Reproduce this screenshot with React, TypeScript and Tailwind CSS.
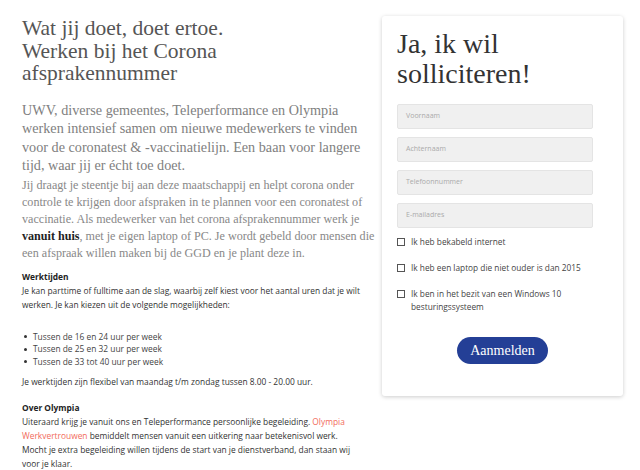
const serif = "font-['Liberation_Serif',serif]";
const sans = "font-['Open_Sans',sans-serif]";

const fields = ["Voornaam", "Achternaam", "Telefoonnummer", "E-mailadres"];

const checks = [
  "Ik heb bekabeld internet",
  "Ik heb een laptop die niet ouder is dan 2015",
  "Ik ben in het bezit van een Windows 10 besturingssysteem",
];

const hours = [
  "Tussen de 16 en 24 uur per week",
  "Tussen de 25 en 32 uur per week",
  "Tussen de 33 tot 40 uur per week",
];

export default function App() {
  return (
    <div className="flex h-[470px] w-[640px] gap-[16px] overflow-hidden bg-white pl-[22px]">
      <div className="w-[344px] shrink-0 pt-[17px]">
        <h1 className={`${serif} text-[21.5px] leading-[22.5px] text-[#555]`}>
          Wat jij doet, doet ertoe.
          <br />
          Werken bij het Corona
          <br />
          afsprakennummer
        </h1>
        <p
          className={`${serif} mt-[16px] whitespace-nowrap text-[14.2px] leading-[18.5px] text-[#808080]`}
        >
          UWV, diverse gemeentes, Teleperformance en Olympia
          <br />
          werken intensief samen om nieuwe medewerkers te vinden
          <br />
          voor de coronatest &amp; -vaccinatielijn. Een baan voor langere
          <br />
          tijd, waar jij er écht toe doet.
        </p>
        <p
          className={`${serif} mt-[2px] whitespace-nowrap text-[12.1px] leading-[17px] text-[#888]`}
        >
          Jij draagt je steentje bij aan deze maatschappij en helpt corona onder
          <br />
          controle te krijgen door afspraken in te plannen voor een coronatest of
          <br />
          vaccinatie. Als medewerker van het corona afsprakennummer werk je
          <br />
          <b className="text-[#222]">vanuit huis</b>, met je eigen laptop of PC. Je wordt gebeld
          door mensen die
          <br />
          een afspraak willen maken bij de GGD en je plant deze in.
        </p>
        <div className={`${sans} mt-[8px] text-[8.4px] leading-[14px] text-[#333]`}>
          <p className="font-bold text-[#222]">Werktijden</p>
          <p>
            Je kan parttime of fulltime aan de slag, waarbij zelf kiest voor het aantal uren dat
            je wilt
            <br />
            werken. Je kan kiezen uit de volgende mogelijkheden:
          </p>
          <ul className="mt-[19px] leading-[12.5px] text-[#444]">
            {hours.map((h) => (
              <li key={h} className="flex items-center gap-[6px] pl-[2px]">
                <span className="h-[3px] w-[3px] rounded-full bg-[#333]" />
                {h}
              </li>
            ))}
          </ul>
          <p className="mt-[7px]">
            Je werktijden zijn flexibel van maandag t/m zondag tussen 8.00 - 20.00 uur.
          </p>
          <p className="mt-[12px] font-bold text-[#222]">Over Olympia</p>
          <p className="whitespace-nowrap">
            Uiteraard krijg je vanuit ons en Teleperformance persoonlijke begeleiding.{" "}
            <span className="text-[#f26b5b]">Olympia</span>
            <br />
            <span className="text-[#f26b5b]">Werkvertrouwen</span> bemiddelt mensen vanuit een
            uitkering naar betekenisvol werk.
            <br />
            Mocht je extra begeleiding willen tijdens de start van je dienstverband, dan staan wij
            <br />
            voor je klaar.
          </p>
        </div>
      </div>

      <div className="mt-[16px] h-[380px] w-[241px] shrink-0 rounded-[3px] bg-white px-[15px] pt-[13px] shadow-[0_1px_4px_rgba(0,0,0,0.2)]">
        <h2 className={`${serif} text-[28px] leading-[30px] text-[#333]`}>
          Ja, ik wil
          <br />
          solliciteren!
        </h2>
        <div className="mt-[15px] flex flex-col gap-[8px]">
          {fields.map((f) => (
            <div
              key={f}
              className={`${sans} flex h-[25px] w-[196px] items-center rounded-[2px] border border-[#e4e4e4] bg-[#f0f0f0] px-[8px] text-[7px] text-[#aaa]`}
            >
              {f}
            </div>
          ))}
        </div>
        <div className={`${sans} mt-[7px] flex flex-col gap-[13px] text-[8.3px] leading-[13px] text-[#444]`}>
          {checks.map((c) => (
            <label key={c} className="flex items-start gap-[6px]">
              <span className="mt-[3px] h-[8px] w-[8px] shrink-0 border border-[#555] bg-white" />
              <span className="w-[178px]">{c}</span>
            </label>
          ))}
        </div>
        <div className="mt-[24px] flex justify-center">
          <button
            className={`${serif} h-[27px] w-[91px] rounded-full bg-[#243f96] text-[14px] text-white`}
          >
            Aanmelden
          </button>
        </div>
      </div>
    </div>
  );
}
